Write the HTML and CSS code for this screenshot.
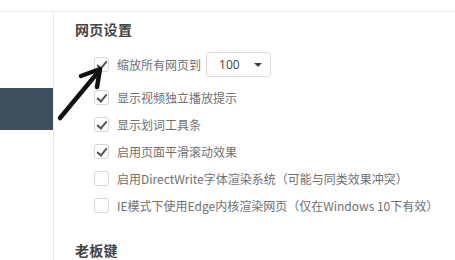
FILE: index.html
```html
<!DOCTYPE html>
<html lang="zh-CN">
<head>
<meta charset="utf-8">
<link rel="stylesheet" href="styles.css">
</head>
<body>
<div class="topbar"></div>
<div class="layout">
  <aside class="sidebar"><div class="sidebar-active"></div></aside>
  <main class="content">
    <h2 class="section-title">网页设置</h2>
    <div class="options">
      <label class="option option-first"><span class="box checked"></span><span class="label">缩放所有网页到</span>
        <span class="select"><span class="select-value">100</span><span class="caret"></span></span>
      </label>
      <label class="option"><span class="box checked"></span><span class="label">显示视频独立播放提示</span></label>
      <label class="option"><span class="box checked"></span><span class="label">显示划词工具条</span></label>
      <label class="option"><span class="box checked"></span><span class="label">启用页面平滑滚动效果</span></label>
      <label class="option"><span class="box"></span><span class="label">启用DirectWrite字体渲染系统（可能与同类效果冲突）</span></label>
      <label class="option"><span class="box"></span><span class="label">IE模式下使用Edge内核渲染网页（仅在Windows 10下有效）</span></label>
    </div>
    <h2 class="section-title section-second">老板键</h2>
  </main>
</div>
<svg class="annot-arrow" width="120" height="130" viewBox="0 0 120 130">
  <path d="M60 118 L99 71" stroke="#111" stroke-width="4.5" stroke-linecap="round" fill="none"/>
  <path d="M81 76 L100 69 L97 87" stroke="#111" stroke-width="4.5" stroke-linecap="round" stroke-linejoin="round" fill="none"/>
</svg>
</body>
</html>
```
FILE: styles.css
```css
html, body {
  margin: 0;
  padding: 0;
  background: #fff;
  width: 455px;
  height: 260px;
  overflow: hidden;
  font-family: "Noto Sans CJK SC", "Open Sans", sans-serif;
  position: relative;
}
.topbar {
  height: 11px;
  border-bottom: 1px solid #ececec;
}
.layout {
  display: flex;
  height: 248px;
}
.sidebar {
  width: 53px;
  border-right: 1px solid #ececec;
  flex: none;
}
.sidebar-active {
  margin-top: 76px;
  height: 42px;
  background: #3f505c;
}
.content {
  flex: 1;
  padding-left: 21px;
}
.section-title {
  margin: 7px 0 0;
  font-size: 14px;
  line-height: 20px;
  font-weight: bold;
  color: #444;
  letter-spacing: 0.3px;
}
.section-second {
  margin-top: 21px;
}
.options {
  margin-top: 12px;
  padding-left: 19px;
}
.option {
  display: flex;
  align-items: center;
  height: 27px;
  font-size: 12px;
  color: #707070;
}
.option-first {
  margin-bottom: 6px;
}
.box {
  width: 15px;
  height: 15px;
  border: 1px solid #d6d6d6;
  border-radius: 3px;
  box-sizing: border-box;
  margin-right: 8px;
  position: relative;
  flex: none;
  background: #fff;
}
.box.checked::after {
  content: "";
  position: absolute;
  left: 4px;
  top: 1px;
  width: 4px;
  height: 8px;
  border-right: 2px solid #555;
  border-bottom: 2px solid #555;
  transform: rotate(40deg);
}
.label {
  white-space: nowrap;
}
.select {
  margin-left: 5px;
  width: 65px;
  height: 25px;
  box-sizing: border-box;
  border: 1px solid #dcdcdc;
  border-radius: 3px;
  display: flex;
  align-items: center;
  justify-content: space-between;
  padding: 0 8px 0 12px;
  font-family: "Open Sans", sans-serif;
  color: #444;
  font-size: 12px;
}
.caret {
  width: 0;
  height: 0;
  border-left: 4px solid transparent;
  border-right: 4px solid transparent;
  border-top: 4px solid #444;
}
.annot-arrow {
  position: absolute;
  left: 0;
  top: 0;
}
```
